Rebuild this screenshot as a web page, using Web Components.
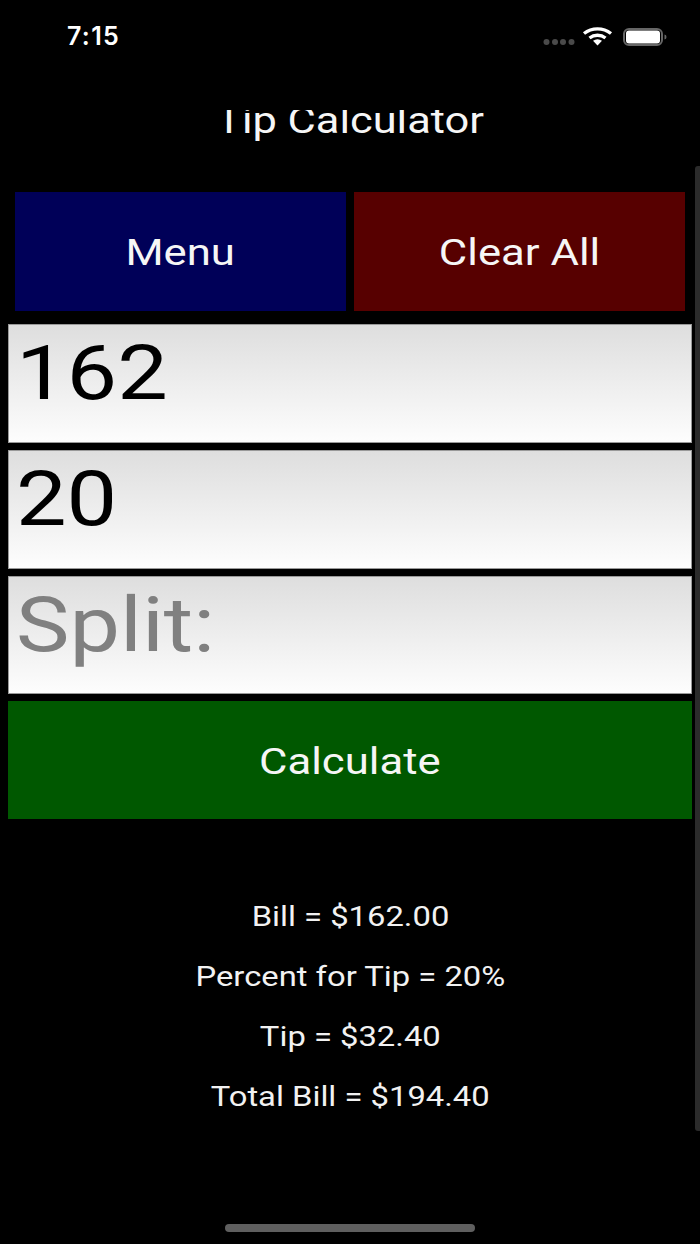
<!DOCTYPE html>
<html>
<head>
<meta charset="utf-8">
<title>Tip Calculator</title>
<style>
  html, body { margin: 0; padding: 0; background: #000; }
  body { width: 700px; height: 1244px; overflow: hidden; position: relative; font-family: Roboto, sans-serif; }
</style>
</head>
<body>
<tip-app></tip-app>

<script>
class StatusBar extends HTMLElement {
  constructor() {
    super();
    this.attachShadow({ mode: 'open' }).innerHTML = `
    <style>
      :host { display: flex; height: 72px; padding: 0 32px 0 67px; align-items: center; justify-content: space-between; box-sizing: border-box; color: #fff; }
      .time { font: 600 25px/1 Inter, "Liberation Sans", sans-serif; letter-spacing: 1.3px; }
      .icons { display: flex; align-items: center; }
    </style>
    <span class="time">7:15</span>
    <div class="icons">
      <svg width="126" height="24" viewBox="0 0 126 24">
        <g fill="#4a4a4a"><circle cx="4.500" cy="18" r="3"/><circle cx="13" cy="18" r="3"/><circle cx="21" cy="18" r="3"/><circle cx="29.500" cy="18" r="3"/></g>
        <g fill="none" stroke="#fff" stroke-width="3.400">
          <path d="M42 9.500a22 22 0 0 1 27 0"/>
          <path d="M47.500 14a13 13 0 0 1 16 0"/>
        </g>
        <path d="M51 16.800a8 8 0 0 1 9 0L55.500 21.500z" fill="#fff"/>
        <rect x="82" y="5" width="38" height="16" rx="5" fill="none" stroke="#666" stroke-width="2"/>
        <rect x="84" y="6.500" width="34" height="13" rx="3" fill="#fff"/>
        <path d="M122.500 10.500v5a2.500 2.500 0 0 0 2-2.500 2.500 2.500 0 0 0-2-2.500z" fill="#666"/>
      </svg>
    </div>`;
  }
}
customElements.define('status-bar', StatusBar);

class TitleBar extends HTMLElement {
  constructor() {
    super();
    this.attachShadow({ mode: 'open' }).innerHTML = `
    <style>
      :host { display: block; height: 50px; margin-top: 38px; overflow: hidden; text-align: center; color: #f6f6f6; }
      div { font: 400 36px/36px Roboto, sans-serif; margin-top: -7px; transform: scaleX(1.205); }
    </style>
    <div><slot></slot></div>`;
  }
}
customElements.define('title-bar', TitleBar);

class TipButton extends HTMLElement {
  constructor() {
    super();
    this.attachShadow({ mode: 'open' }).innerHTML = `
    <style>
      :host { display: flex; height: 119px; flex: 1 1 0; padding-top: 3px; box-sizing: border-box; align-items: center; justify-content: center; color: #f6f6f6; font: 400 36px Roboto, sans-serif; background: var(--bg, #000); }
      span { display: inline-block; transform: scaleX(1.213); }
    </style>
    <span><slot></slot></span>`;
  }
}
customElements.define('tip-button', TipButton);

class TipField extends HTMLElement {
  constructor() {
    super();
    this.attachShadow({ mode: 'open' }).innerHTML = `
    <style>
      :host { display: block; height: 119px; box-sizing: border-box; padding-left: 7px; border: 1px solid #999; background: linear-gradient(#dedede, #fdfdfd); color: #000; font: 400 76px/97px Roboto, sans-serif; }
      :host([placeholder]) { color: #808080; height: 118px; }
      span { display: inline-block; transform: scaleX(1.185); transform-origin: 0 50%; }
    </style>
    <span><slot></slot></span>`;
  }
}
customElements.define('tip-field', TipField);

class ResultLine extends HTMLElement {
  constructor() {
    super();
    this.attachShadow({ mode: 'open' }).innerHTML = `
    <style>
      :host { display: block; transform: scaleX(1.17); }
    </style>
    <slot></slot>`;
  }
}
customElements.define('result-line', ResultLine);

class ResultList extends HTMLElement {
  constructor() {
    super();
    this.attachShadow({ mode: 'open' }).innerHTML = `
    <style>
      :host { display: flex; flex-direction: column; gap: 24px; margin-top: 80px; align-items: center; color: #f2f2f2; font: 400 28px/36px Roboto, sans-serif; }
    </style>
    <slot></slot>`;
  }
}
customElements.define('result-line-list', ResultList);

class TipApp extends HTMLElement {
  constructor() {
    super();
    this.attachShadow({ mode: 'open' }).innerHTML = `
    <style>
      :host { display: block; width: 700px; height: 1244px; position: relative; background: #000; }
      .top { display: flex; gap: 8.500px; padding: 32px 15px 13px; }
      .stack { display: flex; flex-direction: column; gap: 7px; padding: 0 8px; }
      .stack tip-button { flex: none; height: 118px; }
      .scroll { position: absolute; right: 0; top: 166px; width: 5px; height: 965px; background: #2b2b2b; border-radius: 3px 0 0 3px; }
      .home { position: absolute; left: 225px; top: 1224px; width: 250px; height: 8px; border-radius: 4px; background: #5f5f5f; }
    </style>
    <status-bar></status-bar>
    <title-bar>Tip Calculator</title-bar>
    <div class="top">
      <tip-button style="--bg:#000058">Menu</tip-button>
      <tip-button style="--bg:#570000">Clear All</tip-button>
    </div>
    <div class="stack">
      <tip-field>162</tip-field>
      <tip-field>20</tip-field>
      <tip-field placeholder>Split:</tip-field>
      <tip-button style="--bg:#005800">Calculate</tip-button>
    </div>
    <result-line-list>
      <result-line>Bill = $162.00</result-line>
      <result-line>Percent for Tip = 20%</result-line>
      <result-line>Tip = $32.40</result-line>
      <result-line>Total Bill = $194.40</result-line>
    </result-line-list>
    <div class="scroll"></div>
    <div class="home"></div>`;
  }
}
customElements.define('tip-app', TipApp);
</script>
</body>
</html>
